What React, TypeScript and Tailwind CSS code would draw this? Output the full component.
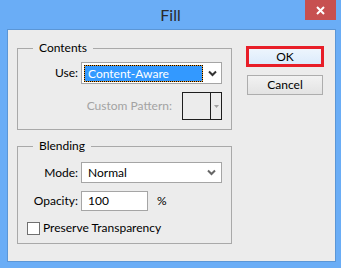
import React from "react";

const font = { fontFamily: "Lato, 'Liberation Sans', sans-serif" };

const Chevron = ({ color }: { color: string }) => (
  <svg width="9" height="7" viewBox="0 0 9 7" className="block">
    <polyline points="1,1.5 4.5,5 8,1.5" fill="none" stroke={color} strokeWidth="2" />
  </svg>
);

const FillDialog = () => {
  return (
    <div className="w-[341px] h-[268px] bg-[#6aadf6] flex flex-col pl-[7px] pr-[5px] pb-[6px] text-[12px] text-black" style={font}>
      {/* title bar */}
      <div className="h-[29px] -ml-[7px] -mr-[5px] relative flex items-center justify-center">
        <span className="text-[16px] text-[#2a2a2a] leading-none">Fill</span>
        <button className="absolute top-0 right-[5px] w-[31px] h-[20px] bg-[#c75050] flex items-center justify-center" aria-label="Close">
          <svg width="9" height="9" viewBox="0 0 9 9">
            <path d="M1 1 L8 8 M8 1 L1 8" stroke="#fff" strokeWidth="2" />
          </svg>
        </button>
      </div>

      {/* client area */}
      <div className="flex-1 bg-[#ececec] border border-[#5b96d6] flex pl-[9px] pr-[11px] pt-[10px]">
        <div className="w-[215px] flex flex-col">
          <fieldset className="border border-[#a9a9a9] pr-[9px]">
            <legend className="ml-[15px] px-[6px] leading-[16px]">Contents</legend>
            <div className="grid grid-cols-[60px_141px] gap-x-[3px] items-center pt-[6px]">
              <span className="text-right leading-[16px]">Use:</span>
              <div className="h-[22px] bg-white border border-[#a5a5a5] flex items-center pl-[2px]">
                <div className="w-[119px] h-[17px] border border-dotted border-black bg-[#f0a030] flex">
                  <div className="flex-1 bg-[#3399ff] text-white leading-[15px] pl-[3px]">Content-Aware</div>
                </div>
                <div className="flex-1 flex justify-center pl-[1px]">
                  <Chevron color="#333" />
                </div>
              </div>
            </div>
            <div className="flex justify-end items-center gap-[10px] mt-[8px] pb-[9px]">
              <span className="text-[#a3a3a3] leading-[16px]">Custom Pattern:</span>
              <div className="w-[40px] h-[28px] border border-[#1e1e1e] flex">
                <div className="flex-1" />
                <div className="w-[11px] border-l border-[#1e1e1e] flex items-center justify-center">
                  <svg width="5" height="3" viewBox="0 0 5 3">
                    <polygon points="0,0 5,0 2.5,3" fill="#a0a0a0" />
                  </svg>
                </div>
              </div>
            </div>
          </fieldset>

          <fieldset className="border border-[#a9a9a9] pr-[9px] mt-[8px]">
            <legend className="ml-[15px] px-[6px] leading-[16px]">Blending</legend>
            <div className="grid grid-cols-[60px_141px] gap-x-[3px] gap-y-[8px] items-center pt-[8px]">
              <span className="text-right leading-[16px]">Mode:</span>
              <div className="h-[21px] bg-white border border-[#a5a5a5] flex items-center">
                <span className="flex-1 pl-[6px] leading-[16px]">Normal</span>
                <div className="w-[19px] flex justify-center">
                  <Chevron color="#666" />
                </div>
              </div>
              <span className="text-right leading-[16px]">Opacity:</span>
              <div className="flex items-center">
                <div className="w-[67px] h-[20px] bg-white border border-[#a5a5a5] flex items-center pl-[6px] leading-[16px]">100</div>
                <span className="ml-[9px] leading-[16px]">%</span>
              </div>
            </div>
            <div className="flex items-center gap-[3px] pl-[9px] mt-[9px] pb-[7px]">
              <div className="w-[13px] h-[13px] bg-white border border-[#707070]" />
              <span className="leading-[16px]">Preserve Transparency</span>
            </div>
          </fieldset>
        </div>

        {/* buttons */}
        <div className="ml-[14px] w-[78px] flex flex-col pt-[6px]">
          <button className="h-[21px] border-[3px] border-[#e81e28] bg-gradient-to-b from-[#edf5fd] to-[#dcebfc] flex items-center justify-center leading-none">
            OK
          </button>
          <button className="mx-[1px] mt-[8px] h-[20px] border border-[#adadad] bg-gradient-to-b from-[#f2f2f2] to-[#e3e3e3] flex items-center justify-center leading-none">
            Cancel
          </button>
        </div>
      </div>
    </div>
  );
};

export default function App() {
  return <FillDialog />;
}
